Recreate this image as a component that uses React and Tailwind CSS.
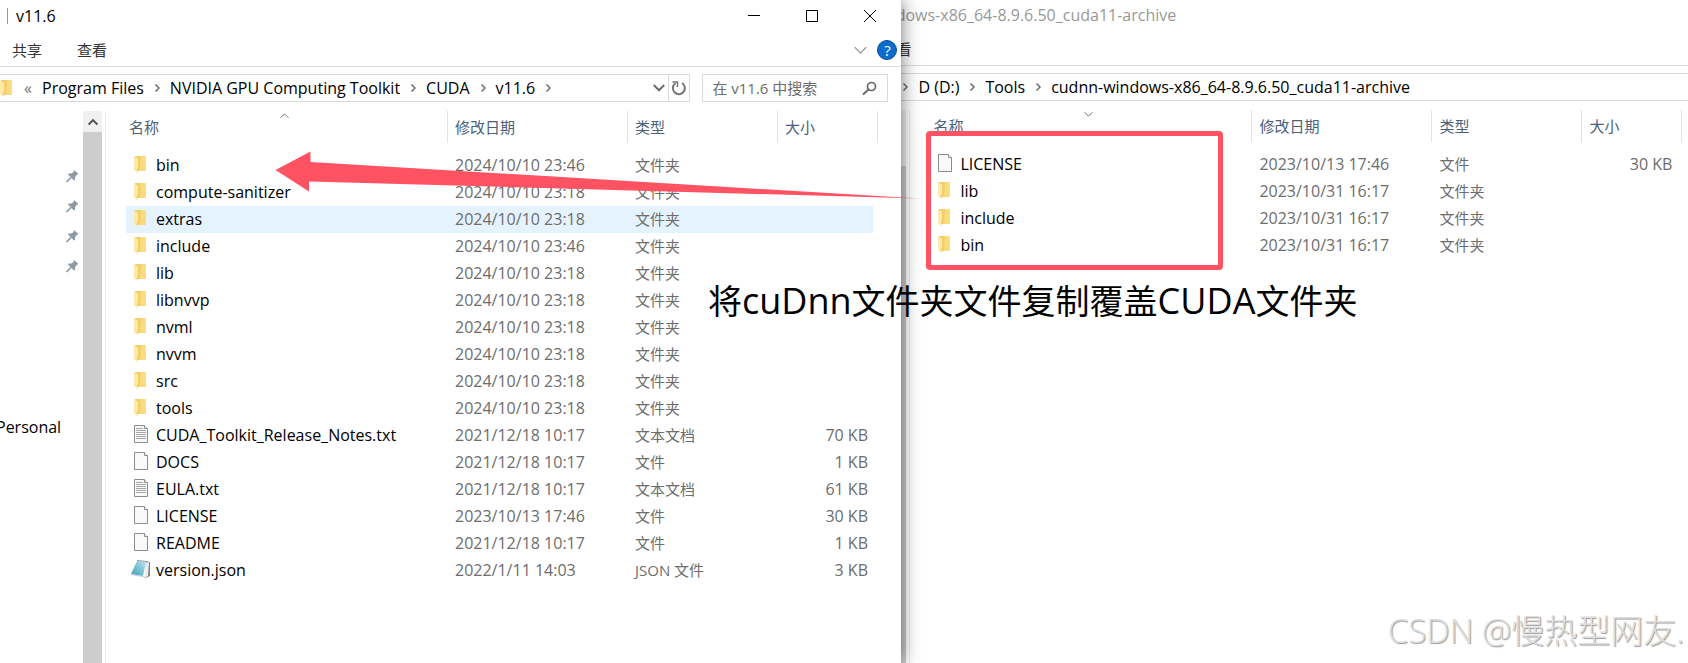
import { Fragment } from 'react'

const toolkitRows = [
    { name: 'bin', kind: 'folder', date: '2024/10/10 23:46', type: '文件夹', size: '' },
    { name: 'compute-sanitizer', kind: 'folder', date: '2024/10/10 23:18', type: '文件夹', size: '' },
    { name: 'extras', kind: 'folder', date: '2024/10/10 23:18', type: '文件夹', size: '', active: true },
    { name: 'include', kind: 'folder', date: '2024/10/10 23:46', type: '文件夹', size: '' },
    { name: 'lib', kind: 'folder', date: '2024/10/10 23:18', type: '文件夹', size: '' },
    { name: 'libnvvp', kind: 'folder', date: '2024/10/10 23:18', type: '文件夹', size: '' },
    { name: 'nvml', kind: 'folder', date: '2024/10/10 23:18', type: '文件夹', size: '' },
    { name: 'nvvm', kind: 'folder', date: '2024/10/10 23:18', type: '文件夹', size: '' },
    { name: 'src', kind: 'folder', date: '2024/10/10 23:18', type: '文件夹', size: '' },
    { name: 'tools', kind: 'folder', date: '2024/10/10 23:18', type: '文件夹', size: '' },
    { name: 'CUDA_Toolkit_Release_Notes.txt', kind: 'text', date: '2021/12/18 10:17', type: '文本文档', size: '70 KB' },
    { name: 'DOCS', kind: 'file', date: '2021/12/18 10:17', type: '文件', size: '1 KB' },
    { name: 'EULA.txt', kind: 'text', date: '2021/12/18 10:17', type: '文本文档', size: '61 KB' },
    { name: 'LICENSE', kind: 'file', date: '2023/10/13 17:46', type: '文件', size: '30 KB' },
    { name: 'README', kind: 'file', date: '2021/12/18 10:17', type: '文件', size: '1 KB' },
    { name: 'version.json', kind: 'json', date: '2022/1/11 14:03', type: 'JSON 文件', size: '3 KB' },
]

const cudnnRows = [
    { name: 'LICENSE', kind: 'file', date: '2023/10/13 17:46', type: '文件', size: '30 KB' },
    { name: 'lib', kind: 'folder', date: '2023/10/31 16:17', type: '文件夹', size: '' },
    { name: 'include', kind: 'folder', date: '2023/10/31 16:17', type: '文件夹', size: '' },
    { name: 'bin', kind: 'folder', date: '2023/10/31 16:17', type: '文件夹', size: '' },
]

function FolderIcon() {
    return (
        <svg width="20" height="20" viewBox="0 0 20 20" className="block" aria-hidden="true">
            <path d="M4 2h10.5v10h.5v5H4z" fill="#f1cf6f" />
            <path d="M10 2h4.500v10h.5v5H9z" fill="#fadb7d" />
            <path d="M3 2l4 3v13l-1 1-3-3z" fill="#ffe9a6" />
            <path d="M7 12v5H6z" fill="#e9c25c" />
        </svg>
    )
}

function FileIcon({ lined }) {
    return (
        <svg width="20" height="20" viewBox="0 0 20 20" className="block" aria-hidden="true">
            <path d="M3.5 1.5h10l3 3v14h-13z" fill="#f8f9fa" stroke="#8c8c8c" />
            <path d="M13.5 1.5v3h3" fill="#fff" stroke="#8c8c8c" />
            {lined && <path d="M5 4.5h7M5 6.5h10M5 8.5h10M5 10.5h10M5 12.5h10M5 14.5h10" stroke="#a6a6a6" />}
        </svg>
    )
}

function NotebookIcon() {
    return (
        <svg width="20" height="20" viewBox="0 0 20 20" className="block" aria-hidden="true">
            <defs>
                <linearGradient id="cover" x1="0" y1="1" x2="1" y2="0">
                    <stop offset="0" stopColor="#3f9fb8" />
                    <stop offset="1" stopColor="#b9e3ec" />
                </linearGradient>
            </defs>
            <path d="M15 2l4 1v14l-4 2z" fill="#8d7f70" />
            <path d="M14 4l4-1-1 14-3 2z" fill="#e6eef2" />
            <path d="M6 2l9 1-3 14-12-2z" fill="url(#cover)" />
            <path d="M6 1.5l10 1" stroke="#9a9a9a" />
            <path d="M0 15.500l12 2 3 1.500" fill="none" stroke="#b8cfd6" />
        </svg>
    )
}

function RowIcon({ kind }) {
    if (kind === 'folder') return <FolderIcon />
    if (kind === 'json') return <NotebookIcon />
    return <FileIcon lined={kind === 'text'} />
}

function Chevron({ dir = 'right', size = 8, color = '#6e6e6e', width = 1.5 }) {
    const paths = {
        right: 'M2.500 0.500L6 4L2.500 7.500',
        down: 'M0.500 2L4 5.500L7.500 2',
        up: 'M0.500 6L4 2.500L7.500 6',
    }
    return (
        <svg width={size} height={size} viewBox="0 0 8 8" className="block shrink-0" aria-hidden="true">
            <path d={paths[dir]} fill="none" stroke={color} strokeWidth={(width * 8) / size} />
        </svg>
    )
}

function PinIcon() {
    return (
        <svg width="14" height="14" viewBox="0 0 14 14" className="block" aria-hidden="true">
            <path d="M9 1L13.500 5L11.500 6L10 8.500V11L9 11.500L3 5.500L3.500 4.500H6.500L8.500 3z" fill="#8e9aa3" />
            <path d="M6 8.500L1.500 13" stroke="#8e9aa3" strokeWidth="1.700" />
        </svg>
    )
}

function WindowControls() {
    return (
        <div className="ml-auto mr-[2px] flex h-full">
            <button aria-label="最小化" className="flex w-[58px] items-center justify-center">
                <svg width="12" height="12" viewBox="0 0 12 12"><path d="M0 5.500h12" stroke="#000" /></svg>
            </button>
            <button aria-label="最大化" className="flex w-[58px] items-center justify-center">
                <svg width="12" height="12" viewBox="0 0 12 12"><path d="M.5.5h11v11H.5z" fill="none" stroke="#000" /></svg>
            </button>
            <button aria-label="关闭" className="flex w-[58px] items-center justify-center">
                <svg width="12" height="12" viewBox="0 0 12 12"><path d="M0 0l12 12M12 0L0 12" stroke="#000" /></svg>
            </button>
        </div>
    )
}

function FileTable({ rows, sort }) {
    return (
        <table className="w-[752px] table-fixed border-collapse text-left">
            <colgroup>
                <col className="w-[321px]" />
                <col className="w-[180px]" />
                <col className="w-[150px]" />
                <col className="w-[101px]" />
            </colgroup>
            <thead>
                <tr className="text-[15px] leading-8 text-[#4c607a]">
                    <th className="relative h-[41px] p-0 align-top font-normal">
                        <div className="h-8 pl-[3px]">名称</div>
                        <span className="absolute left-[154px] top-0">
                            <Chevron dir={sort} size={9} width={1} />
                        </span>
                    </th>
                    <th className="p-0 align-top font-normal">
                        <div className="h-8 border-l border-[#e2e2e2] pl-[7px]">修改日期</div>
                    </th>
                    <th className="p-0 align-top font-normal">
                        <div className="h-8 border-l border-[#e2e2e2] pl-[7px]">类型</div>
                    </th>
                    <th className="p-0 align-top font-normal">
                        <div className="h-8 border-x border-[#e2e2e2] pl-[7px]">大小</div>
                    </th>
                </tr>
            </thead>
            <tbody>
                {rows.map((row) => (
                    <tr key={row.name} className="group text-base leading-[27px] text-[#6d6d6d]" data-active={row.active}>
                        <td className="p-0 group-data-[active=true]:bg-[#e5f3ff]">
                            <div className="flex h-[27px] gap-[5px] pl-[5px] text-black">
                                <span className="pt-[2px]"><RowIcon kind={row.kind} /></span>
                                <span>{row.name}</span>
                            </div>
                        </td>
                        <td className="p-0 pl-2 group-data-[active=true]:bg-[#e5f3ff]">{row.date}</td>
                        <td className="p-0 pl-2 text-[15px] group-data-[active=true]:bg-[#e5f3ff]">{row.type}</td>
                        <td className="p-0 pr-[5px]">
                            <div className="h-[27px] pr-[5px] text-right group-data-[active=true]:bg-[#e5f3ff]">{row.size}</div>
                        </td>
                    </tr>
                ))}
            </tbody>
        </table>
    )
}

function PathItems({ items }) {
    return items.map((item) => (
        <Fragment key={item}>
            <a href="#" className="whitespace-nowrap">{item}</a>
            <span className="px-[9px]"><Chevron /></span>
        </Fragment>
    ))
}

function ToolkitWindow() {
    return (
        <section className="relative z-10 flex w-[53.4%] shrink-0 flex-col bg-white shadow-[0_0_18px_rgba(0,0,0,0.55)]">
            <header className="flex h-8 items-center pl-[7px]">
                <span className="h-4 w-px bg-[#999]" />
                <h1 className="pl-2 text-base">v11.6</h1>
                <WindowControls />
            </header>

            {/* Ribbon tabs */}
            <div className="flex h-[35px] items-center border-b border-[#dadbdc] pl-3 pr-1 pt-[2px] text-[15px] text-[#333]">
                <button>共享</button>
                <button className="ml-[35px]">查看</button>
                <button aria-label="展开功能区" className="ml-auto">
                    <Chevron dir="down" size={13} color="#a0a0a0" width={1.5} />
                </button>
                <button aria-label="帮助" className="ml-[10px] flex size-5 items-center justify-center rounded-full border border-[#0a4f94] bg-[#0a6ccd] text-[15px] text-white">
                    ?
                </button>
            </div>

            {/* Address bar */}
            <div className="flex gap-3 py-[7px] pr-[13px]">
                <nav className="flex h-7 flex-1 items-center border-y border-r border-[#d9d9d9] text-base">
                    <div className="-ml-[3px]"><FolderIcon /></div>
                    <span className="w-[25px] pl-[7px] text-[#6e6e6e]">«</span>
                    <PathItems items={['Program Files', 'NVIDIA GPU Computing Toolkit', 'CUDA', 'v11.6']} />
                    <button aria-label="历史记录" className="ml-auto mr-[3px]">
                        <Chevron dir="down" size={12} width={2} />
                    </button>
                    <button aria-label="刷新" className="flex h-full w-[21px] items-center justify-center border-l border-[#d9d9d9]">
                        <svg width="16" height="16" viewBox="0 0 16 16" aria-hidden="true">
                            <path d="M11 3A6 6 0 1 1 4.500 3.200" fill="none" stroke="#757575" strokeWidth="2" />
                            <path d="M1.500 2H6.500V7" fill="none" stroke="#757575" strokeWidth="1.500" />
                        </svg>
                    </button>
                </nav>
                <label className="flex h-7 w-[186px] items-center border border-[#d9d9d9] pl-[9px] pr-[10px]">
                    <input
                        type="search"
                        aria-label="搜索"
                        placeholder="在 v11.6 中搜索"
                        className="min-w-0 flex-1 text-[15px] outline-none placeholder:text-[#6d6d6d]"
                    />
                    <svg width="15" height="15" viewBox="0 0 15 15" aria-hidden="true">
                        <circle cx="9.500" cy="5.500" r="4" fill="none" stroke="#6b6b6b" strokeWidth="1.700" />
                        <path d="M6.500 8.500L1 13.500" stroke="#6b6b6b" strokeWidth="2" />
                    </svg>
                </label>
            </div>

            <div className="flex flex-1 pt-[2px]">
                <aside className="flex w-[83px] flex-col">
                    <div className="flex flex-col items-end gap-4 pr-1 pt-[58px]">
                        <PinIcon />
                        <PinIcon />
                        <PinIcon />
                        <PinIcon />
                    </div>
                    <a href="#" className="-ml-1 mt-[142px] text-base">Personal</a>
                </aside>
                <div className="flex w-[19px] flex-col bg-[#cdcdcd]">
                    <button aria-label="向上滚动" className="flex h-[21px] items-center justify-center bg-[#f0f0f0]">
                        <Chevron dir="up" size={10} color="#505050" width={2} />
                    </button>
                </div>
                <div className="ml-[3px] w-px bg-[#f0f0f0]" />
                <div className="pl-5"><FileTable rows={toolkitRows} sort="up" /></div>
            </div>
        </section>
    )
}

function CudnnWindow() {
    return (
        <section className="-ml-[97px] -mt-px flex min-w-0 flex-1 flex-col bg-white">
            <header className="flex h-8 items-center pl-[13px]">
                <h2 className="whitespace-nowrap text-base text-[#999]">cudnn-windows-x86_64-8.9.6.50_cuda11-archive</h2>
            </header>
            <div className="flex h-[35px] items-center border-b border-[#dadbdc] pl-[77px] pt-[2px] text-[15px] text-[#333]">
                <button>查看</button>
            </div>
            <div className="py-[7px]">
                <nav className="flex h-7 items-center border-y border-[#d9d9d9] pl-[97px] text-base">
                    <span className="pr-[9px]"><Chevron /></span>
                    <PathItems items={['D (D:)', 'Tools']} />
                    <a href="#" className="whitespace-nowrap">cudnn-windows-x86_64-8.9.6.50_cuda11-archive</a>
                </nav>
            </div>
            <div className="flex flex-1 pt-[2px]">
                <div className="ml-[83px] flex w-[19px] flex-col bg-[#cdcdcd]">
                    <div className="h-14 bg-[#f0f0f0]" />
                </div>
                <div className="ml-[3px] w-px bg-[#f0f0f0]" />
                <div className="pl-5"><FileTable rows={cudnnRows} sort="down" /></div>
            </div>
        </section>
    )
}

// Arrow, frame and caption drawn over both windows
function Annotations() {
    return (
        <div className="pointer-events-none absolute inset-0 z-20">
            <svg width="650" height="50" viewBox="0 0 650 50" className="absolute left-[275px] top-[150px]" aria-hidden="true">
                <path d="M0.500 20L35.500 1.500V12L645 48.500L34 31.500V41.500z" fill="#ff5263" />
            </svg>
            <div className="absolute left-[926px] top-[131px] h-[139px] w-[297px] rounded border-[5px] border-[#ff5263]" />
            <p className="absolute left-[708px] top-[277px] whitespace-nowrap text-[34px] leading-[48px] text-black">
                将<span className="text-[36px]">cuDnn</span>文件夹文件复制覆盖<span className="text-[36px]">CUDA</span>文件夹
            </p>
            <p className="absolute bottom-2 right-1 whitespace-nowrap text-[33px] font-light leading-[48px] text-[#dedede] [text-shadow:1px_1px_1px_#999]">
                CSDN @慢热型网友.
            </p>
        </div>
    )
}

function App() {
    return (
        <main className="relative flex min-h-screen overflow-hidden bg-white font-['Open_Sans','Noto_Sans_CJK_SC',sans-serif] text-black">
            <ToolkitWindow />
            <CudnnWindow />
            <Annotations />
        </main>
    )
}

export default App
